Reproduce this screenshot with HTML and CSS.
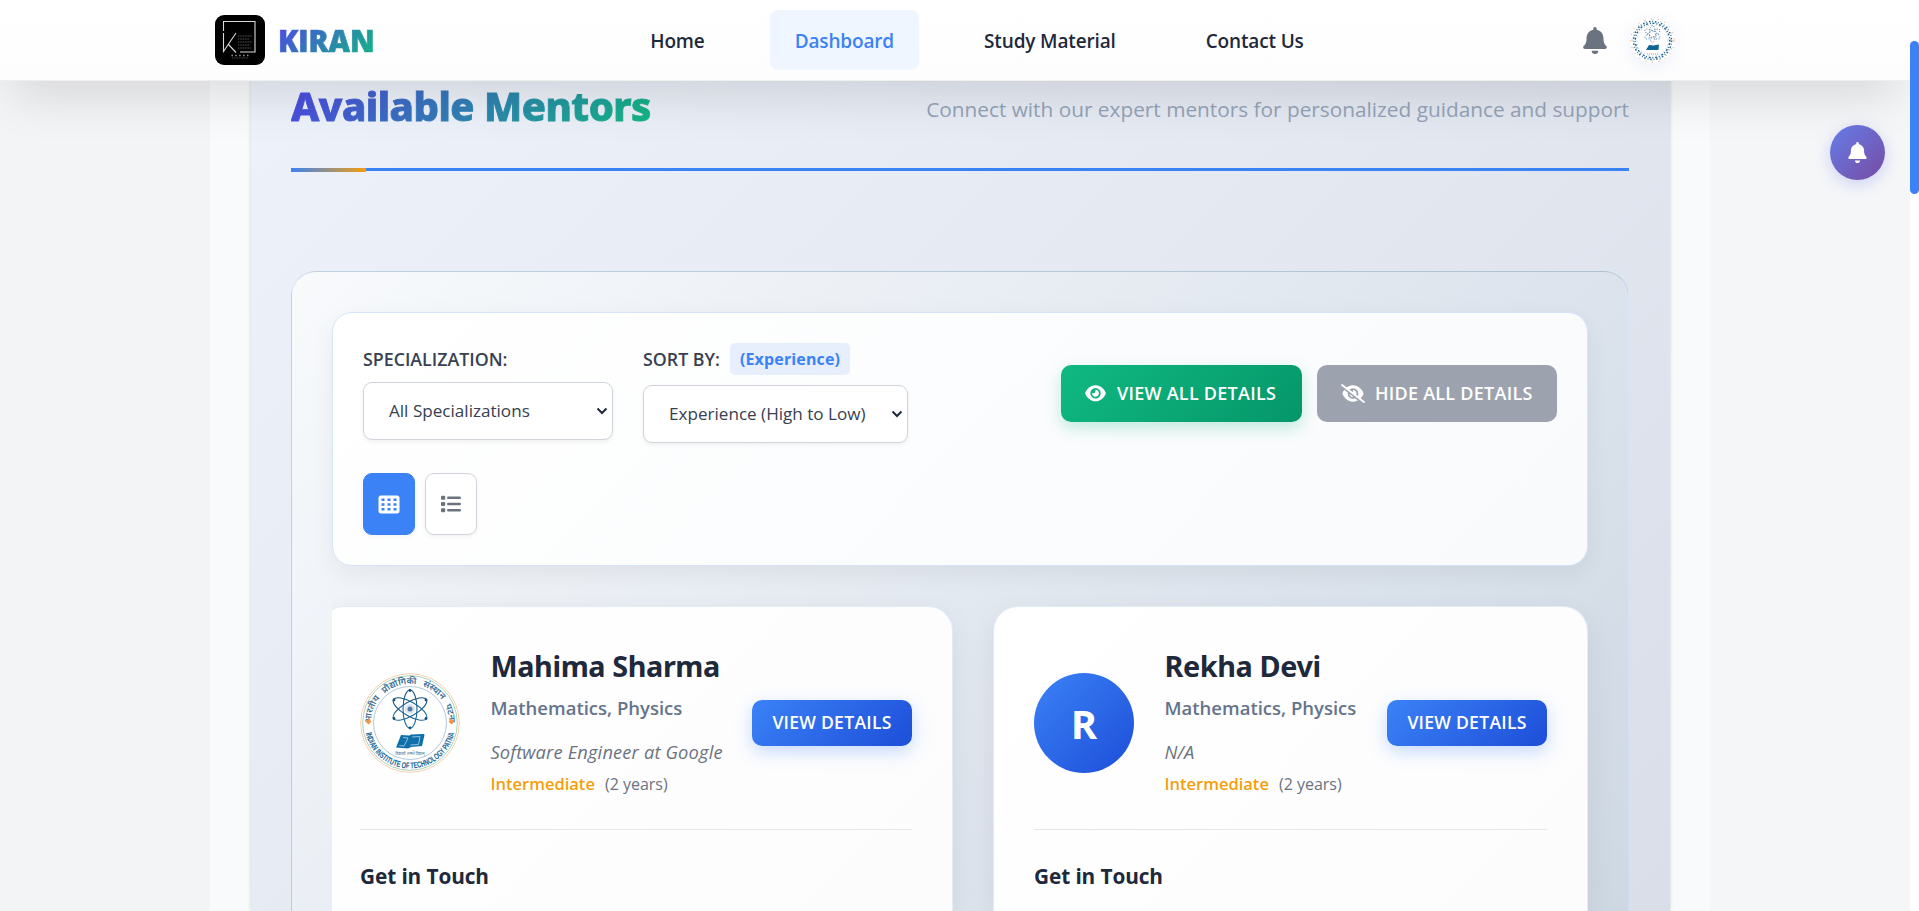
FILE: index.html
```
<!DOCTYPE html>
<html lang="en">
<head>
<meta charset="utf-8">
<title>KIRAN - Dashboard</title>
<link rel="stylesheet" href="styles.css">
</head>
<body>
<svg class="defs" width="0" height="0" aria-hidden="true">
  <defs>
    <symbol id="bell" viewBox="0 0 448 512"><path fill="currentColor" d="M224 512c35.32 0 63.97-28.65 63.97-64H160.03c0 35.35 28.65 64 63.97 64zm215.39-149.71c-19.32-20.76-55.47-51.99-55.47-154.29 0-77.7-54.48-139.9-127.94-155.16V32c0-17.67-14.32-32-31.98-32s-31.98 14.33-31.98 32v20.84C118.56 68.1 64.08 130.3 64.08 208c0 102.3-36.15 133.53-55.47 154.29-6 6.45-8.66 14.16-8.61 21.71.11 16.4 12.98 32 32.1 32h383.8c19.12 0 32-15.6 32.1-32 .05-7.55-2.61-15.27-8.61-21.71z"/></symbol>
    <symbol id="eye" viewBox="0 0 576 512"><path fill="currentColor" d="M288 32c-80.8 0-145.5 36.8-192.6 80.6C48.6 156 17.3 208 2.5 243.7c-3.3 7.9-3.3 16.7 0 24.6C17.3 304 48.6 356 95.4 399.4C142.5 443.2 207.2 480 288 480s145.5-36.8 192.6-80.6c46.8-43.5 78.1-95.4 93-131.1c3.3-7.9 3.3-16.7 0-24.6c-14.9-35.7-46.2-87.7-93-131.1C433.5 68.8 368.8 32 288 32zM144 256a144 144 0 1 1 288 0 144 144 0 1 1 -288 0zm144-64c0 35.3-28.7 64-64 64c-7.1 0-13.9-1.2-20.3-3.3c-5.5-1.8-11.9 1.6-11.7 7.4c.3 6.9 1.3 13.8 3.2 20.7c13.7 51.2 66.4 81.6 117.6 67.9s81.6-66.4 67.9-117.6c-11.1-41.5-47.8-69.4-88.6-71.1c-5.8-.2-9.2 6.1-7.4 11.7c2.1 6.4 3.3 13.2 3.3 20.3z"/></symbol>
    <mask id="slash-gap" maskUnits="userSpaceOnUse" x="0" y="0" width="640" height="512"><rect width="640" height="512" fill="#fff"/><path d="M0 54L600 524" stroke="#000" stroke-width="56"/></mask>
    <linearGradient id="seal-blue" x1="0" y1="0" x2="0" y2="1"><stop offset="0" stop-color="#14507f"/><stop offset="1" stop-color="#1c6ea0"/></linearGradient>
  </defs>
</svg>

<header class="topbar">
  <div class="topbar-inner">
    <a class="brand">
      <svg class="brand-logo" viewBox="0 0 50 50">
        <rect width="50" height="50" rx="9" fill="#000"/>
        <g fill="none" stroke="#d9d9d9" stroke-width="1.1">
          <path d="M8.5 16V6.5H40V37H25"/>
          <path d="M8.5 18V36.5L21 18M13.5 29.5L21 37.5"/>
        </g>
        <g stroke="#777" stroke-width=".8" stroke-dasharray="1 .7">
          <path d="M23 21h14M23 24h11M23 27h14M23 30h12M23 33h13"/>
          <path d="M17 43h16" stroke="#666"/>
        </g>
        <path d="M16.5 40.5h17" stroke="#aaa" stroke-width="1.6" stroke-dasharray="1.3 2.6"/>
      </svg>
      <span class="brand-name">KIRAN</span>
    </a>
    <nav class="nav">
      <a class="nav-link">Home</a>
      <a class="nav-link active">Dashboard</a>
      <a class="nav-link">Study Material</a>
      <a class="nav-link">Contact Us</a>
    </nav>
    <div class="account">
      <svg class="account-bell"><use href="#bell"/></svg>
      <svg class="account-avatar" viewBox="0 0 45 45" fill="none">
        <circle cx="22.5" cy="22.5" r="22.5" fill="#fff"/>
        <circle cx="22.5" cy="22.5" r="21.8" stroke="#f3a35c" stroke-dasharray="1.2 5.5"/>
        <circle cx="22.5" cy="22.5" r="20.5" stroke="#5fae8b" stroke-width=".8" stroke-dasharray="1 7"/>
        <circle cx="22.5" cy="22.5" r="19" stroke="#1b6390" stroke-width="1.5" stroke-dasharray="1.5 1.8 .8 2"/>
        <circle cx="22.5" cy="22.5" r="17.2" stroke="#1b6390" stroke-width="1.4" stroke-dasharray="1 1.6 2 1.9"/>
        <circle cx="22.5" cy="22.5" r="15.6" stroke="#9db6ca" stroke-width=".8" stroke-dasharray="1 3"/>
        <g stroke="#4b7ca3" stroke-dasharray="1 1.5">
          <ellipse cx="22.5" cy="16" rx="3" ry="8.5"/>
          <ellipse cx="22.5" cy="16" rx="3" ry="8.5" transform="rotate(60 22.5 16)"/>
          <ellipse cx="22.5" cy="16" rx="3" ry="8.5" transform="rotate(-60 22.5 16)"/>
        </g>
        <path d="M16 32l3-5 4.500.5 5.500-1-.5 5.500h-5z" fill="#0f6595"/>
        <path d="M17 36h11" stroke="#7b9cb8" stroke-dasharray="1 1"/>
      </svg>
    </div>
  </div>
</header>

<div class="scrollbar"><div class="scroll-thumb"></div></div>
<button class="fab"><svg class="fab-icon"><use href="#bell"/></svg></button>

<main class="page">
  <section class="mentors">
    <div class="mentors-head">
      <h1 class="mentors-title">Available Mentors</h1>
      <p class="mentors-sub">Connect with our expert mentors for personalized guidance and support</p>
    </div>

    <div class="board">
      <div class="filters">
        <div class="filters-row">
          <div class="field">
            <div class="field-label">SPECIALIZATION:</div>
            <div class="select select-spec"><span>All Specializations</span><svg class="caret" viewBox="0 0 12 8"><path d="M1.5 1.5L6 6l4.5-4.5" fill="none" stroke="currentColor" stroke-width="2"/></svg></div>
          </div>
          <div class="field">
            <div class="field-label sort-label">SORT BY: <span class="sort-badge">(Experience)</span></div>
            <div class="select select-sort"><span>Experience (High to Low)</span><svg class="caret" viewBox="0 0 12 8"><path d="M1.5 1.5L6 6l4.5-4.5" fill="none" stroke="currentColor" stroke-width="2"/></svg></div>
          </div>
          <div class="bulk">
            <button class="bulk-btn view-all"><svg class="eye" viewBox="0 0 576 512"><use href="#eye"/></svg>VIEW ALL DETAILS</button>
            <button class="bulk-btn hide-all"><svg class="eye-off" viewBox="0 0 640 512"><g mask="url(#slash-gap)"><use href="#eye" x="32" width="576" height="512"/></g><path d="M25 25L615 487" stroke="currentColor" stroke-width="48" stroke-linecap="round"/></svg>HIDE ALL DETAILS</button>
          </div>
        </div>
        <div class="toggles">
          <button class="toggle on"><svg viewBox="0 0 22 19" width="22" height="19"><rect x=".5" y=".5" width="21" height="18" rx="2.5" fill="#fff"/><g fill="#3b82f6"><path d="M3.5 3.5h3v2.5h-3zM9.5 3.5h3v2.5h-3zM15.5 3.5h3v2.5h-3zM3.5 8.3h3v2.5h-3zM9.5 8.3h3v2.5h-3zM15.5 8.3h3v2.5h-3zM3.5 13.1h3v2.5h-3zM9.5 13.1h3v2.5h-3zM15.5 13.1h3v2.5h-3z"/></g></svg></button>
          <button class="toggle"><svg viewBox="0 0 20 18" width="20" height="18" fill="#6b7280"><rect y=".8" width="4.2" height="4" rx="1"/><rect y="7" width="4.2" height="4" rx="1"/><rect y="13.2" width="4.2" height="4" rx="1"/><rect x="6" y="1.6" width="14" height="2.4" rx="1.2"/><rect x="6" y="7.8" width="14" height="2.4" rx="1.2"/><rect x="6" y="14" width="14" height="2.4" rx="1.2"/></svg></button>
        </div>
      </div>

      <div class="cards">
        <article class="card">
          <div class="card-top">
            <svg class="avatar" viewBox="0 0 100 100" fill="none">
              <circle cx="50" cy="50" r="50" fill="#fff"/>
              <circle cx="50" cy="50" r="49.3" stroke="#f8cda8"/>
              <circle cx="50" cy="50" r="47.3" stroke="#a9d3bd"/>
              <circle cx="50" cy="50" r="36.5" stroke="#9fb9d2" stroke-width=".8"/>
              <path id="arc-top" d="M11 50A39 39 0 0 1 89 50"/>
              <path id="arc-bottom" d="M4.5 50A45.5 45.5 0 0 0 95.5 50"/>
              <text class="seal-hi"><textPath href="#arc-top" startOffset="50%" text-anchor="middle">भारतीय प्रौद्योगिकी संस्थान पटना</textPath></text>
              <text class="seal-en"><textPath href="#arc-bottom" startOffset="50%" text-anchor="middle" textLength="122" lengthAdjust="spacingAndGlyphs">INDIAN INSTITUTE OF TECHNOLOGY PATNA</textPath></text>
              <g fill="#f79443"><path d="M8.5 45.5l3 3-3 3-3-3zM91.5 45.5l3 3-3 3-3-3z"/></g>
              <g stroke="url(#seal-blue)" stroke-width="1.1">
                <ellipse cx="50" cy="36" rx="7" ry="19"/>
                <ellipse cx="50" cy="36" rx="7" ry="19" transform="rotate(60 50 36)"/>
                <ellipse cx="50" cy="36" rx="7" ry="19" transform="rotate(-60 50 36)"/>
              </g>
              <circle cx="50" cy="36" r="5" fill="#dbe6f0"/><circle cx="50" cy="36" r="2.5" fill="#4e7ba3"/>
              <g fill="#174f7d"><circle cx="50" cy="17.5" r="1.4"/><circle cx="50" cy="55" r="1.4"/><circle cx="34" cy="27" r="1.4"/><circle cx="66" cy="27" r="1.4"/><circle cx="34" cy="45.5" r="1.4"/><circle cx="66" cy="45.5" r="1.4"/></g>
              <path d="M36 74.5L41 62l8.500.5L51 61.500l13-.5.500 1-2.500 11-11 1-3 1.500z" fill="#0f6fa8"/>
              <path d="M43 64.500l5 .5-4 8-4.500-.5M52 64l8-.5-1.500 8-8 .5" stroke="#9fcbe4" stroke-width=".9"/>
              <text class="seal-motto" x="50" y="81.500" text-anchor="middle">विद्यार्थी लभते विद्याम्</text>
            </svg>
            <div class="info">
              <h2 class="name">Mahima Sharma</h2>
              <div class="subjects">Mathematics, Physics</div>
              <div class="job">Software Engineer at Google</div>
              <div class="level"><span class="level-name">Intermediate</span><span class="years">(2 years)</span></div>
            </div>
            <button class="details">VIEW DETAILS</button>
          </div>
          <h3 class="touch">Get in Touch</h3>
        </article>
        <article class="card">
          <div class="card-top">
            <div class="avatar initial">R</div>
            <div class="info">
              <h2 class="name">Rekha Devi</h2>
              <div class="subjects">Mathematics, Physics</div>
              <div class="job">N/A</div>
              <div class="level"><span class="level-name">Intermediate</span><span class="years">(2 years)</span></div>
            </div>
            <button class="details">VIEW DETAILS</button>
          </div>
          <h3 class="touch">Get in Touch</h3>
        </article>
      </div>
    </div>
  </section>
</main>
</body>
</html>
```
FILE: styles.css
```
* { box-sizing: border-box; margin: 0; padding: 0; }
html, body { height: 911px; overflow: hidden; }
body {
  font-family: "Open Sans", "Noto Sans", sans-serif;
  color: #1e293b;
  background: #fff;
}
button { font: inherit; border: 0; }
.defs { position: absolute; }

/* top bar */
.topbar {
  position: absolute;
  inset: 0 9px auto 0;
  z-index: 5;
  height: 81px;
  background: linear-gradient(#fff, #fdfdfd);
  border-bottom: 1px solid #efefef;
  box-shadow: 0 25px 50px -12px rgba(0, 0, 0, .13);
}
.topbar-inner {
  display: grid;
  grid-template-columns: 1fr auto 1fr;
  align-items: center;
  height: 80px;
  margin: 0 235px 0 215px;
}
.brand { display: flex; align-items: center; gap: 13px; }
.brand-logo { width: 50px; height: 50px; }
.brand-name {
  font-size: 29.5px;
  font-weight: 800;
  line-height: 40px;
  padding-top: 2px;
  background: linear-gradient(135deg, #4f46e5, #10b981);
  background-clip: text;
  -webkit-background-clip: text;
  -webkit-text-stroke: .7px transparent;
  color: transparent;
}
.nav { display: flex; gap: 40px; margin-right: -81.5px; margin-left: -17.5px; }
.nav-link {
  padding: 2px 25px 0;
  height: 60px;
  line-height: 58px;
  border-radius: 8px;
  font-size: 19px;
  font-weight: 600;
  letter-spacing: -.15px;
  white-space: nowrap;
}
.nav-link.active { color: #3b82f6; background: #eff6ff; }
.account { display: flex; justify-content: flex-end; align-items: center; gap: 23px; }
.account-bell { width: 24px; height: 27px; color: #6b7280; }
.account-avatar { width: 45px; height: 45px; border-radius: 50%; box-shadow: 0 4px 15px rgba(102, 126, 234, .1); }

/* window furniture */
.scrollbar { position: absolute; inset: 0 0 0 auto; width: 9px; padding-top: 41px; background: #fff; z-index: 6; }
.scroll-thumb { height: 153px; border-radius: 4.5px; background: #3b82f6; }
.fab {
  position: absolute;
  top: 125px;
  right: 34px;
  width: 55px;
  height: 55px;
  display: grid;
  place-items: center;
  border-radius: 50%;
  color: #fff;
  background: linear-gradient(135deg, #667eea, #764ba2);
  box-shadow: 0 4px 15px rgba(102, 126, 234, .3);
}
.fab-icon { width: 19px; height: 21px; }

/* page */
.page {
  width: 1910px;
  height: 911px;
  overflow: hidden;
  padding: 0 200px 0 210px;
  background: linear-gradient(90deg, #f3f4f6 210px, #f9fafc 210px 1710px, #f5f6f8 1710px);
}
.mentors {
  width: 1419px;
  height: 911px;
  margin-left: 41px;
  padding: 82px 41px 0 40px;
  background: linear-gradient(135deg, #eef3fb, #dadee8);
  box-shadow: 0 0 4px rgba(0, 0, 0, .16);
}
.mentors-head {
  display: flex;
  align-items: center;
  justify-content: space-between;
  height: 89px;
  border-bottom: 3px solid #3b82f6;
  padding-bottom: 38px;
  position: relative;
}
.mentors-head::after {
  content: "";
  position: absolute;
  left: 0;
  bottom: -4px;
  width: 75px;
  height: 4px;
  background: linear-gradient(90deg, #3b82f6, #f59e0b);
}
.mentors-title {
  font-family: "Noto Sans", "Open Sans", sans-serif;
  font-size: 40px;
  font-weight: 800;
  line-height: 54px;
  letter-spacing: -.5px;
  background: linear-gradient(135deg, #4f46e5, #10b981);
  background-clip: text;
  -webkit-background-clip: text;
  -webkit-text-stroke: .9px transparent;
  color: transparent;
}
.mentors-sub { font-size: 20.8px; line-height: 28px; color: #94a3b8; padding-top: 6px; }

.board {
  height: 640px;
  margin-top: 100px;
  padding: 40px;
  border: 1px solid rgba(59, 130, 246, .16);
  border-top-color: rgba(100, 140, 180, .3);
  border-bottom: 0;
  border-radius: 25px 25px 0 0;
  background: linear-gradient(135deg, #f8fafc 0%, #e2e8f0 53%, #ced8e3 100%);
}
.filters {
  height: 254px;
  padding: 30px 30px 0 30px;
  border: 1px solid #d6e4fb;
  border-radius: 20px;
  background: linear-gradient(135deg, #fff, #f8fafc);
  box-shadow: 0 8px 25px rgba(0, 0, 0, .06);
}
.filters-row { display: flex; align-items: flex-start; gap: 30px; height: 130px; }
.field-label {
  display: flex;
  align-items: center;
  height: 32px;
  font-size: 17.8px;
  font-weight: 600;
  line-height: 32px;
  color: #374151;
}
.sort-label { gap: 10px; margin-bottom: 10px; }
.field-label:not(.sort-label) { margin-bottom: 7px; }
.sort-badge {
  height: 32px;
  padding: 0 10px;
  border-radius: 5px;
  background: #e7eefc;
  color: #3b82f6;
  font-size: 16px;
  font-weight: 700;
  letter-spacing: .15px;
  line-height: 32px;
}
.select {
  display: flex;
  align-items: center;
  justify-content: space-between;
  height: 58px;
  padding: 0 4px 1px 25px;
  border: 1px solid #d1d5db;
  border-radius: 9px;
  background: #fff;
  box-shadow: 0 2px 4px rgba(0, 0, 0, .06);
  color: #374151;
  font-size: 17.1px;
}
.select-spec { width: 250px; }
.select-sort { width: 265px; }
.caret { width: 12px; height: 8px; color: #1e293b; }
.bulk { display: flex; gap: 15px; margin: 22px 0 0 auto; }
.bulk-btn {
  display: flex;
  align-items: center;
  height: 57px;
  border-radius: 10px;
  color: #fff;
  font-size: 18px;
  font-weight: 600;
  letter-spacing: .25px;
  white-space: nowrap;
  padding-left: 24px;
  padding-bottom: 1px;
}
.view-all { width: 241px; gap: 11px; background: linear-gradient(135deg, #10b981, #059669); box-shadow: 0 6px 16px rgba(16, 185, 129, .25); }
.hide-all { width: 240px; gap: 10px; background: #9ca3af; }
.eye { width: 21px; height: 18.5px; }
.eye-off { width: 24px; height: 19px; }
.toggles { display: flex; gap: 10px; }
.toggle {
  display: grid;
  place-items: center;
  width: 52px;
  height: 62px;
  border: 1px solid #d1d5db;
  border-radius: 9px;
  background: #fff;
  box-shadow: 0 2px 4px rgba(0, 0, 0, .05);
}
.toggle.on { background: #3b82f6; border-color: #3b82f6; }

/* mentor cards; the first one slides under the list's left edge */
.cards {
  display: grid;
  grid-template-columns: 634px 595px;
  gap: 40px;
  height: 345px;
  margin: 0 -40px;
  padding: 40px 40px 0 27px;
  clip-path: inset(0 0 0 40px);
}
.card {
  height: 305px;
  padding: 40px 40px 0;
  border: 1px solid #e3ebf9;
  border-bottom: 0;
  border-radius: 25px 25px 0 0;
  background: linear-gradient(135deg, #fff, #fcfcfd);
  box-shadow: 0 10px 30px rgba(0, 0, 0, .07);
}
.card-top {
  display: flex;
  align-items: center;
  height: 183px;
  border-bottom: 1px solid #e5e7eb;
}
.avatar { width: 100px; height: 100px; flex: none; border-radius: 50%; margin-top: -31px; }
.initial {
  display: grid;
  place-items: center;
  color: #fff;
  font-size: 40px;
  font-weight: 700;
  padding-top: 1px;
  background: linear-gradient(135deg, #3b82f6, #1d4ed8);
}
.seal-hi { font: 600 9px "Noto Sans", "Noto Sans Devanagari", sans-serif; word-spacing: 4px; fill: #3a6f98; }
.seal-en { font: 700 8.5px "Liberation Sans", sans-serif; fill: #17628f; }
.seal-motto { font: 4px "Noto Sans", "Noto Sans Devanagari", sans-serif; fill: #3a6f98; }
.info { align-self: flex-start; margin: -1px 0 0 30.5px; white-space: nowrap; }
.name { font-family: "Noto Sans", "Open Sans", sans-serif; font-size: 28.8px; font-weight: 700; line-height: 40px; letter-spacing: -.4px; }
.subjects { margin-top: 9px; font-size: 18.5px; font-weight: 600; line-height: 26px; color: #64748b; }
.job { margin-top: 18px; font-size: 18.3px; font-style: italic; line-height: 26px; letter-spacing: .16px; color: #6b7280; }
.level { display: flex; gap: 10px; margin-top: 6px; line-height: 26px; }
.level-name { font-size: 16.5px; font-weight: 600; color: #f59e0b; }
.years { font-size: 16px; color: #6b7280; }
.details {
  width: 160px;
  height: 46px;
  margin: -31px 0 0 auto;
  padding-bottom: 1px;
  border-radius: 10px;
  color: #fff;
  background: linear-gradient(135deg, #3b82f6, #1d4ed8);
  box-shadow: 0 6px 18px rgba(59, 130, 246, .28);
  font-size: 17.6px;
  font-weight: 600;
  letter-spacing: .25px;
}
.touch { margin-top: 31px; font-size: 20.8px; font-weight: 700; line-height: 30px; letter-spacing: -.1px; }
```
